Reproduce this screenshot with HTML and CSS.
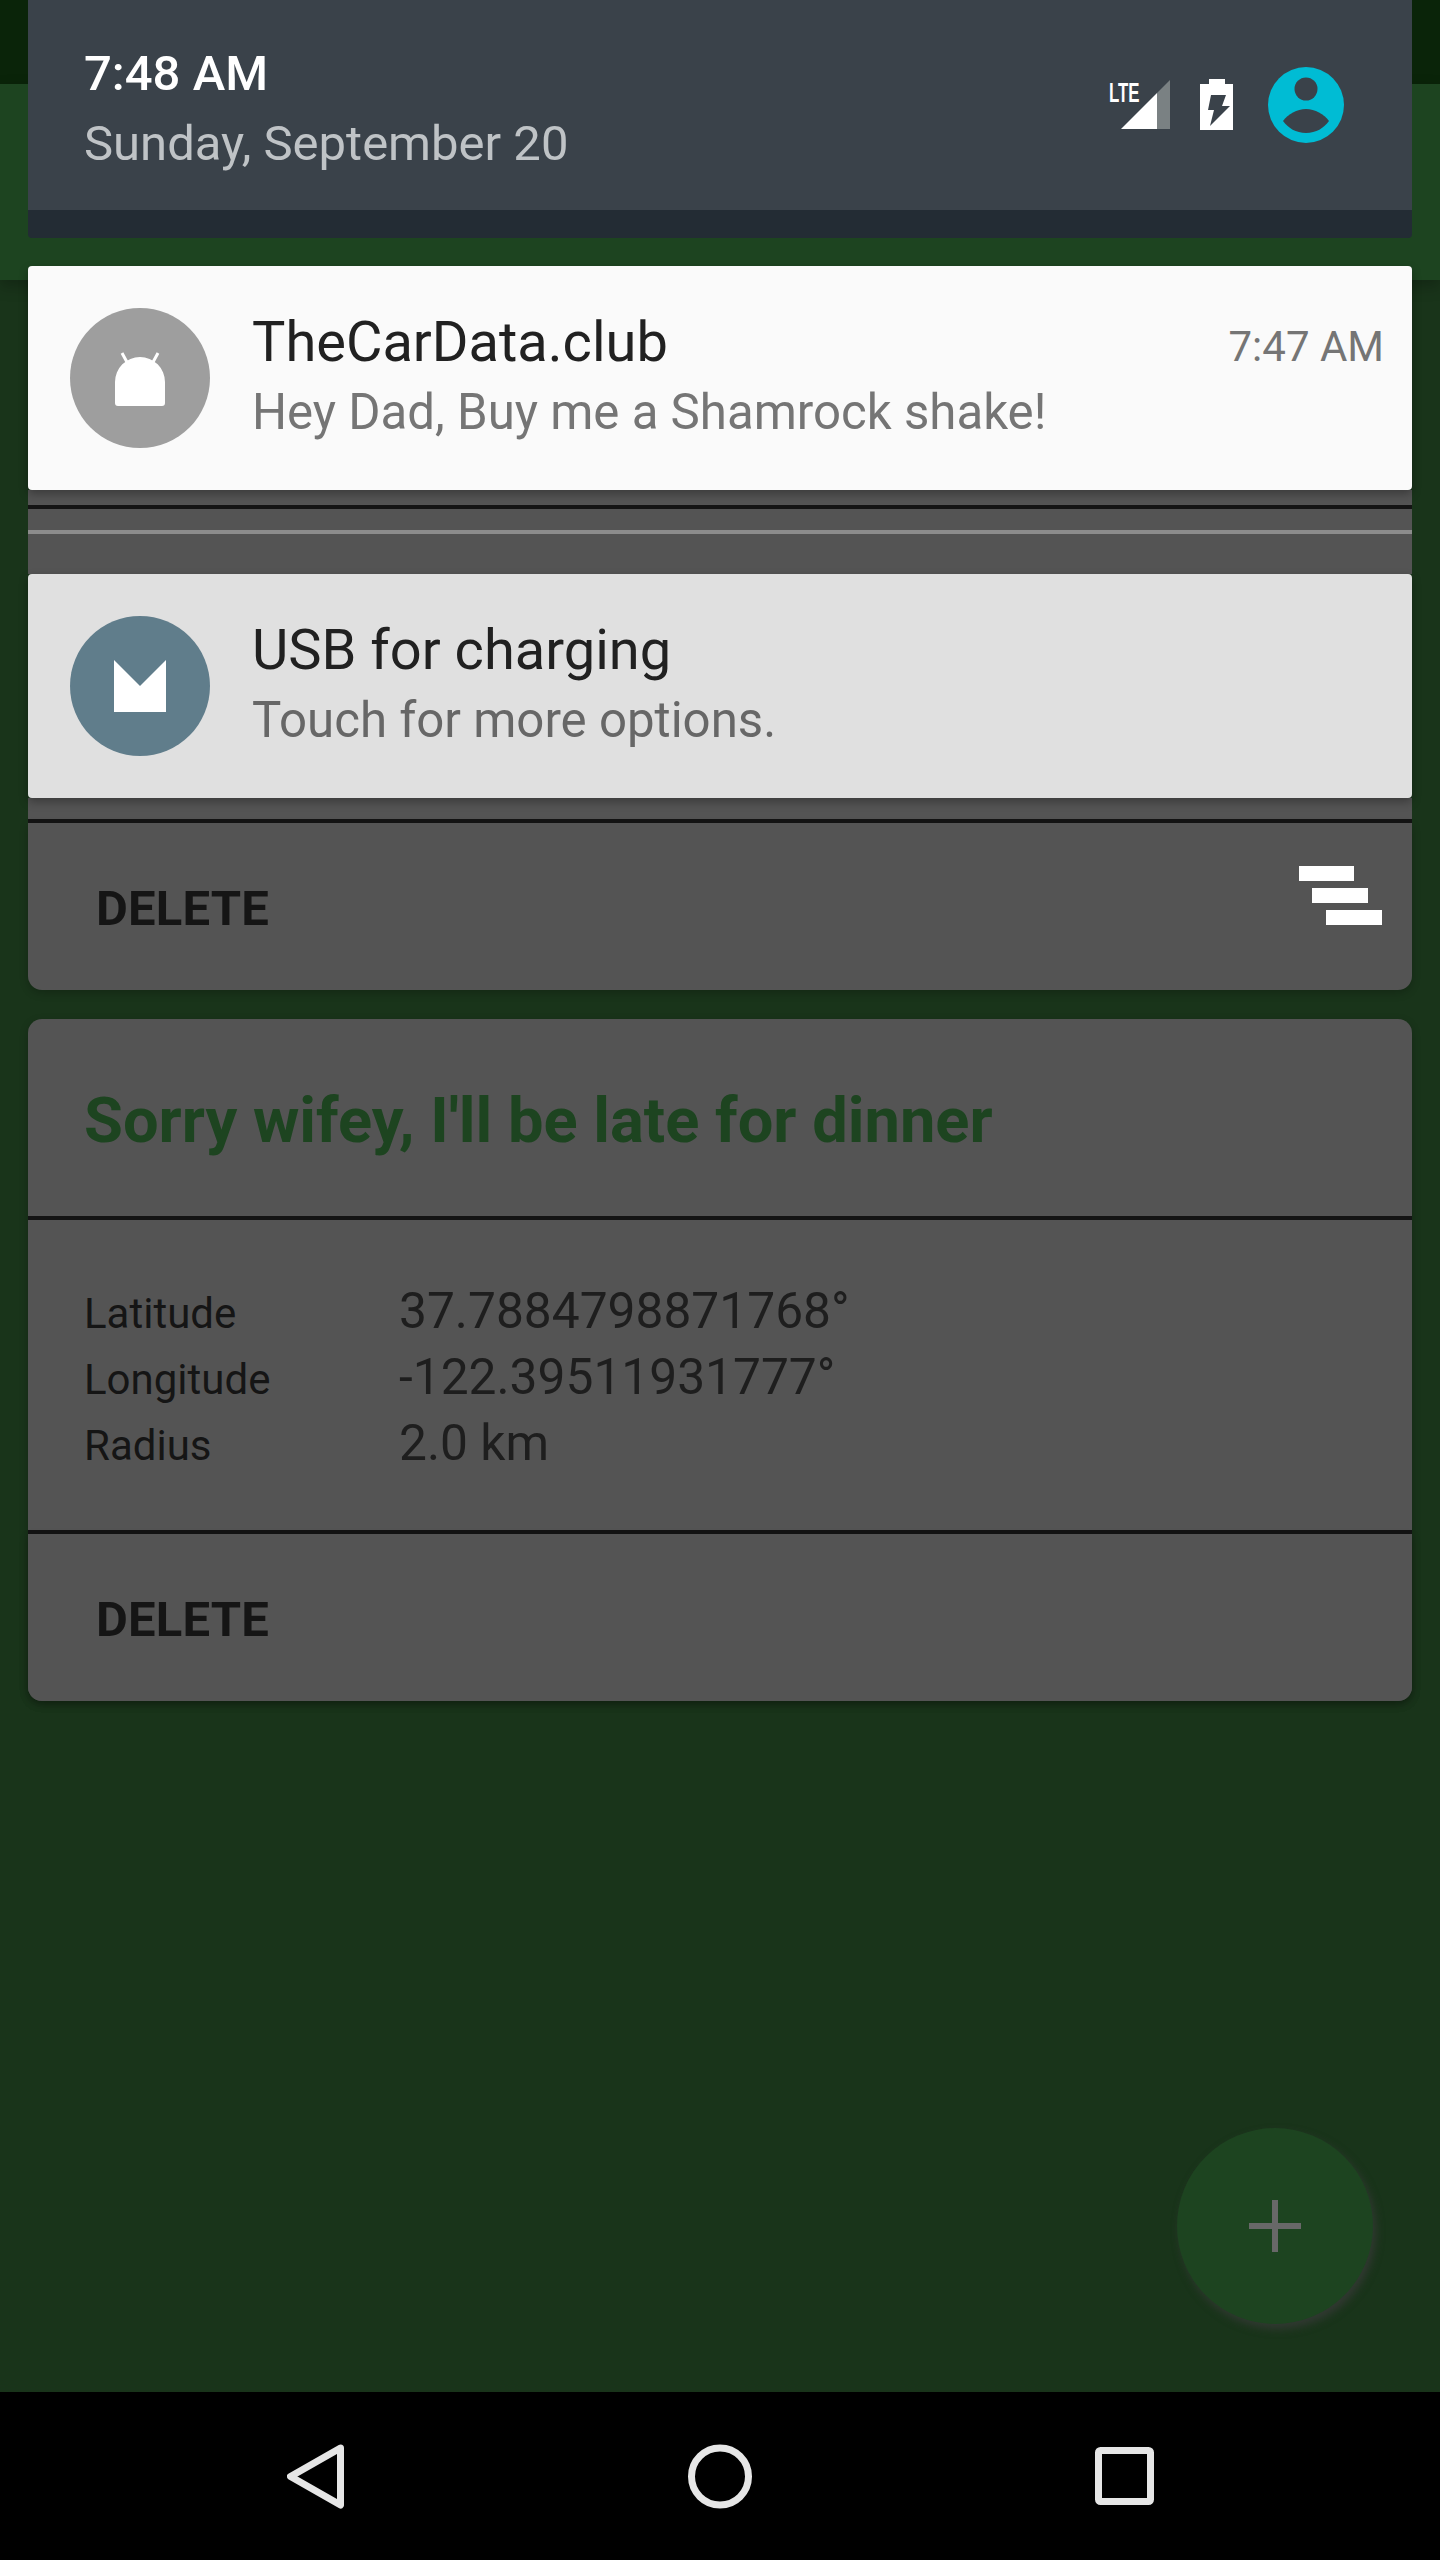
FILE: index.html
```html
<!DOCTYPE html>
<html lang="en">
<head>
<meta charset="utf-8">
<title>Notification shade</title>
<link rel="stylesheet" href="styles.css">
</head>
<body>
<div class="screen">
  <div class="status-bar"></div>
  <div class="app-bar"></div>
  <main class="content">
    <button class="fab" aria-label="Add">
      <svg class="fab-icon" viewBox="0 0 52 52"><path d="M23 0h6v23h23v6H29v23h-6V29H0v-6h23z"/></svg>
    </button>
  </main>
  <nav class="nav-bar">
    <svg class="nav-back" viewBox="0 0 58 65"><path d="M53.500 4 L3.500 32.500 L53.500 61 Z"/></svg>
    <svg class="nav-home" viewBox="0 0 64 65"><circle cx="32" cy="32.500" r="28.500"/></svg>
    <svg class="nav-recents" viewBox="0 0 59 58"><rect x="3.500" y="3.500" width="52" height="51" rx="2"/></svg>
  </nav>

  <section class="shade">
    <header class="shade-header">
      <div class="clock">
        <div class="clock-time">7:48 AM</div>
        <div class="clock-date">Sunday, September 20</div>
      </div>
      <div class="status-icons">
        <div class="signal">
          <span class="lte">LTE</span>
          <svg class="signal-icon" viewBox="0 0 49 49"><path class="signal-on" d="M0 49 36 13v36z"/><path class="signal-off" d="M36 13 49 0v49H36z"/></svg>
        </div>
        <svg class="battery-icon" viewBox="0 0 33 51"><path class="battery-body" d="M9 0h16v5h8v46H0V5h9z"/><path class="battery-bolt" d="M11 16h15l-4 11h8L10 47l4-16H8z"/></svg>
        <svg class="avatar-icon" viewBox="0 0 76 76"><circle class="avatar-bg" cx="38" cy="38" r="38"/><circle class="avatar-cut" cx="38" cy="22" r="11.500"/><path class="avatar-cut" d="M15 54c5-7 14-12 23-12s18 5 23 12c-5 7-13 12-23 12s-18-5-23-12z"/></svg>
      </div>
    </header>
    <div class="shade-strip"></div>

    <article class="notification notification-light">
      <svg class="notif-icon" viewBox="0 0 140 140"><circle class="icon-grey" cx="70" cy="70" r="70"/><path class="icon-antenna" d="M52 45l6 11M88 45l-6 11"/><path class="icon-white" d="M45 100V74a25 25 0 0 1 50 0v21q0 3-3 3H48q-3 0-3-3z"/></svg>
      <div class="notif-body">
        <div class="notif-top">
          <span class="notif-title">TheCarData.club</span>
          <time class="notif-time">7:47 AM</time>
        </div>
        <div class="notif-text">Hey Dad, Buy me a Shamrock shake!</div>
      </div>
    </article>

    <div class="gap-a"></div>
    <div class="rule"></div>
    <div class="gap-b"></div>
    <div class="rule-light"></div>
    <div class="gap-c"></div>

    <article class="notification notification-dim">
      <svg class="notif-icon" viewBox="0 0 140 140"><circle class="icon-slate" cx="70" cy="70" r="70"/><path class="icon-white" d="M44 44l26 26 26-26v52H44z"/></svg>
      <div class="notif-body">
        <div class="notif-top">
          <span class="notif-title">USB for charging</span>
        </div>
        <div class="notif-text">Touch for more options.</div>
      </div>
    </article>

    <div class="gap-d"></div>
    <div class="rule"></div>
    <div class="card-actions card-actions-tail">
      <span class="delete">DELETE</span>
      <svg class="dismiss-icon" viewBox="0 0 83 59"><path d="M0 0h55v15H0zM13 22h56v15H13zM27 44h56v15H27z"/></svg>
    </div>

    <article class="card">
      <h2 class="card-title">Sorry wifey, I'll be late for dinner</h2>
      <div class="rule"></div>
      <dl class="geo">
        <dt>Latitude</dt><dd>37.7884798871768°</dd>
        <dt>Longitude</dt><dd>-122.39511931777°</dd>
        <dt>Radius</dt><dd>2.0 km</dd>
      </dl>
      <div class="rule"></div>
      <div class="card-actions">
        <span class="delete">DELETE</span>
      </div>
    </article>
  </section>
</div>
</body>
</html>
```

FILE: styles.css
```css
* { box-sizing: border-box; }

html, body {
  margin: 0;
  padding: 0;
  background: #000;
}

.screen {
  position: relative;
  width: 1440px;
  height: 2560px;
  overflow: hidden;
  display: flex;
  flex-direction: column;
  font-family: Roboto, "Liberation Sans", sans-serif;
  background: #19341a;
}

.status-bar { height: 84px; background: #0a2409; }
.app-bar { height: 196px; background: #1d4420; box-shadow: 0 6px 14px rgba(0, 0, 0, .25); }

.content {
  position: relative;
  flex: 1;
}

.fab {
  position: absolute;
  left: 1177px;
  top: 1848px;
  width: 196px;
  height: 196px;
  padding: 0;
  border: 0;
  border-radius: 50%;
  background: #1d4420;
  box-shadow: 3px 5px 8px rgba(70, 60, 70, .55);
  display: flex;
  align-items: center;
  justify-content: center;
}
.fab-icon { width: 52px; height: 52px; fill: #686868; }

.nav-bar {
  height: 168px;
  background: #000;
  display: grid;
  grid-template-columns: repeat(3, 404px);
  padding: 0 114px;
  justify-items: center;
  align-items: center;
}
.nav-bar svg { fill: none; stroke: #e6e6e6; stroke-width: 7; stroke-linejoin: round; }
.nav-back { width: 58px; height: 65px; }
.nav-home { width: 64px; height: 65px; }
.nav-recents { width: 59px; height: 58px; }

.shade {
  position: absolute;
  left: 28px;
  top: 0;
  width: 1384px;
  display: flex;
  flex-direction: column;
}

.shade-header {
  height: 210px;
  background: #3a424a;
  padding: 39px 68px 0 56px;
  display: flex;
  justify-content: space-between;
  align-items: flex-start;
}
.shade-strip {
  height: 28px;
  margin-bottom: 28px;
  background: #232c34;
  border-radius: 0 0 4px 4px;
}

.clock-time { font-size: 49px; font-weight: 500; line-height: 70px; color: #fff; }
.clock-date { font-size: 49px; line-height: 70px; color: #bfc3c6; }

.status-icons {
  display: flex;
  align-items: flex-start;
  margin-top: 28px;
}
.signal { position: relative; width: 61px; height: 62px; margin-top: 13px; }
.lte {
  position: absolute;
  left: 0;
  top: 0;
  font-family: "Liberation Sans", sans-serif;
  font-size: 28px;
  font-weight: 700;
  line-height: 25px;
  color: #fff;
  transform: scaleX(.6);
  transform-origin: left top;
}
.signal-icon { position: absolute; left: 12px; top: 0; width: 49px; height: 49px; }
.signal-on { fill: #fff; }
.signal-off { fill: #7a8183; }

.battery-icon { width: 33px; height: 51px; margin: 12px 35px 0 30px; flex: none; }
.battery-body { fill: #fff; }
.battery-bolt { fill: #3a424a; }

.avatar-icon { width: 76px; height: 76px; flex: none; }
.avatar-bg { fill: #00bcd4; }
.avatar-cut { fill: #3a424a; }

.notification {
  position: relative;
  z-index: 1;
  height: 224px;
  display: flex;
  align-items: flex-start;
  padding: 42px 28px 0 42px;
  gap: 42px;
  border-radius: 4px;
  box-shadow: 0 4px 10px rgba(0, 0, 0, .3);
}
.notification-light { background: #fafafa; }
.notification-dim { background: #e0e0e0; }

.notif-icon { width: 140px; height: 140px; flex: none; }
.icon-grey { fill: #9e9e9e; }
.icon-slate { fill: #607d8b; }
.icon-white { fill: #fff; }
.icon-antenna { fill: none; stroke: #fff; stroke-width: 3; }

.notif-body { flex: 1; margin-top: -1px; }
.notif-top { display: flex; justify-content: space-between; align-items: baseline; }
.notif-title { font-size: 56px; line-height: 70px; color: #212121; }
.notif-time { font-size: 42px; color: #757575; }
.notif-text { font-size: 49.2px; line-height: 71px; color: #757575; }
.notification-dim .notif-text { color: #676767; }

.gap-a { height: 15px; background: #545454; }
.gap-b { height: 21px; background: #545454; }
.gap-c { height: 40px; background: #545454; }
.gap-d { height: 21px; background: #545454; }

.rule { height: 4px; background: #141414; flex: none; }
.rule-light { height: 4px; background: #8c8c8c; }

.card-actions {
  height: 167px;
  padding: 5px 30px 0 68px;
  display: flex;
  align-items: center;
  justify-content: space-between;
  background: #545454;
  border-radius: 0 0 14px 14px;
  box-shadow: 0 3px 8px rgba(0, 0, 0, .22);
}
.card-actions-tail { margin-bottom: 29px; }
.delete { font-size: 49px; font-weight: 700; line-height: 70px; letter-spacing: .2px; color: #151515; }
.dismiss-icon { width: 83px; height: 59px; fill: #fff; align-self: flex-start; margin-top: 38px; }

.card {
  background: #545454;
  border-radius: 14px;
  box-shadow: 0 3px 8px rgba(0, 0, 0, .22);
}
.card-title {
  height: 197px;
  margin: 0;
  padding: 5px 56px 0;
  display: flex;
  align-items: center;
  font-size: 63.2px;
  font-weight: 700;
  color: #1d4420;
}

.geo {
  margin: 0;
  height: 310px;
  padding: 58px 56px 0;
  display: grid;
  grid-template-columns: 315px 1fr;
  grid-auto-rows: 66px;
  align-items: baseline;
}
.geo dt { font-size: 42px; line-height: 66px; color: #151515; }
.geo dd { margin: 0; font-size: 49.7px; line-height: 66px; color: #1e1e1e; }
```
